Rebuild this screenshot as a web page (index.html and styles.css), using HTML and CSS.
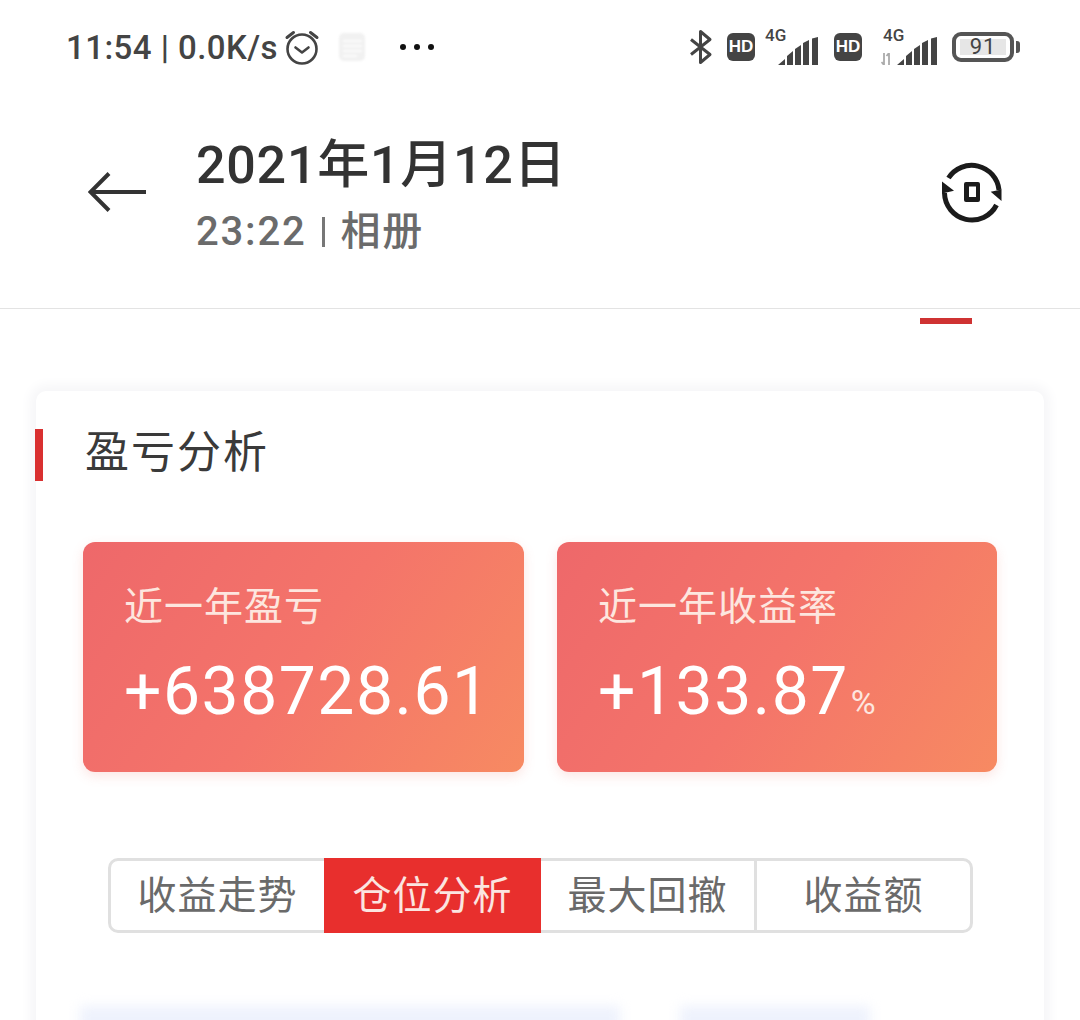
FILE: index.html
```html
<!DOCTYPE html>
<html lang="zh-CN">
<head>
<meta charset="utf-8">
<title>盈亏分析</title>
<link rel="stylesheet" href="styles.css">
</head>
<body>
<div class="phone">
  <div class="statusbar">
    <div class="status-left">
      <span class="clock">11:54 | 0.0K/s</span>
      <svg class="alarm" width="36" height="36" viewBox="0 0 36 36" fill="none" stroke="#444" stroke-width="2.6" stroke-linecap="round" stroke-linejoin="round"><circle cx="18" cy="20" r="14.5"/><path d="M11.5 18.5l6.5 5 6.5-5"/><path d="M3 8.5 9.5 3.5M33 8.5 26.500 3.500" stroke-width="3"/></svg>
      <svg class="doc" width="34" height="32" viewBox="0 0 34 32"><rect x="3" y="2" width="26" height="28" rx="5" fill="#f1f1f1"/><path d="M7 10h19M7 15h19M7 20h19M7 25h14" stroke="#fcfcfc" stroke-width="1.800"/></svg>
      <div class="dots"><i></i><i></i><i></i></div>
    </div>
    <div class="status-right">
      <svg class="bt" width="24" height="36" viewBox="0 0 24 36" fill="none" stroke="#444" stroke-width="3" stroke-linejoin="round"><path d="M2 10.500 21 25.500 11.500 33.500V2.500L21 10.500 2 25.500"/></svg>
      <span class="hd">HD</span>
      <div class="signal signal-a">
        <span class="net">4G</span>
        <svg width="40" height="28" viewBox="0 0 40 28" fill="#444"><path d="M0 28l7-6v6zM9 28V19l6-5v14zM17 28V12l6-4v20zM25 28V6l6-3v25zM34 28V1.500L40 0v28z"/></svg>
      </div>
      <span class="hd">HD</span>
      <div class="signal signal-b">
        <span class="net">4G</span>
        <svg class="arrows" width="11" height="12" viewBox="0 0 11 12" fill="none" stroke="#aaa" stroke-width="1.800"><path d="M3 0v12M0.500 9l2.500 3M8 12V0M5.500 3L8 0"/></svg>
        <svg width="40" height="28" viewBox="0 0 40 28" fill="#444"><path d="M0 28l7-6v6zM9 28V19l6-5v14zM17 28V12l6-4v20zM25 28V6l6-3v25zM34 28V1.500L40 0v28z"/></svg>
      </div>
      <div class="battery"><span class="level">91</span></div>
      <span class="cap"></span>
    </div>
  </div>

  <header class="topbar">
    <svg class="back" width="58" height="40" viewBox="0 0 58 40" fill="none" stroke="#333" stroke-width="4"><path d="M58 20H3M21 1.500 2.500 20 21 38.500"/></svg>
    <div class="titles">
      <h1 class="date">2021年1月12日</h1>
      <p class="meta"><span>23:22</span><i class="sep"></i><span>相册</span></p>
    </div>
    <svg class="rotate" width="62" height="62" viewBox="0 0 62 62" fill="none"><path d="M7.500 17A27.500 27.500 0 0 1 58 29M55.500 44A27.500 27.500 0 0 1 3.500 32" stroke="#1b1b1b" stroke-width="5"/><path d="M49.700 30.700 60.500 28.500 60.500 40zM1 20.500 13 29.700 1 32.500z" fill="#1b1b1b"/><path fill-rule="evenodd" d="M25 21h12a2 2 0 0 1 2 2v16a2 2 0 0 1-2 2H25a2 2 0 0 1-2-2V23a2 2 0 0 1 2-2zM28 25.500v10.500h7V25.500z" fill="#1b1b1b"/></svg>
  </header>

  <main class="content">
    <div class="tab-mark"></div>
    <section class="card">
      <h2 class="card-title">盈亏分析</h2>
      <div class="stats">
        <div class="stat">
          <div class="stat-label">近一年盈亏</div>
          <div class="stat-value">+638728.61</div>
        </div>
        <div class="stat">
          <div class="stat-label">近一年收益率</div>
          <div class="stat-value">+133.87<small>%</small></div>
        </div>
      </div>
      <div class="segments">
        <div class="segment">收益走势</div>
        <div class="segment active">仓位分析</div>
        <div class="segment">最大回撤</div>
        <div class="segment divided">收益额</div>
      </div>
      <div class="blurs"><i class="blur-a"></i><i class="blur-b"></i></div>
    </section>
  </main>
</div>
</body>
</html>
```
FILE: styles.css
```css
* { box-sizing: border-box; }
html, body { margin: 0; padding: 0; background: #fff; }
body { font-family: "Roboto", "Noto Sans CJK SC", sans-serif; }
.phone { width: 1080px; height: 1020px; overflow: hidden; background: #fff; }

.statusbar { height: 96px; padding: 0 60px 2px 66px; display: flex; align-items: center; justify-content: space-between; }
.status-left, .status-right { display: flex; align-items: center; }
.clock { font-size: 33px; font-weight: 500; color: #444; white-space: nowrap; letter-spacing: 0.45px; }
.alarm { margin-left: 6px; }
.doc { margin-left: 16px; filter: blur(1px); }
.dots { margin-left: 30px; display: flex; gap: 8px; }
.dots i { width: 6px; height: 6px; border-radius: 50%; background: #111; }
.bt { margin-right: 14px; }
.hd { width: 28px; height: 28px; border-radius: 6px; background: #444; color: #fff; font: 700 17px/28px "Liberation Sans", sans-serif; text-align: center; }
.signal { position: relative; height: 36px; display: flex; justify-content: flex-end; align-items: flex-end; }
.signal svg { display: block; }
.signal-a { width: 53px; margin: 0 16px 0 10px; }
.signal-b { width: 56px; margin: 0 15px 0 19px; }
.net { position: absolute; left: 0; top: -3px; font-size: 17px; font-weight: 500; color: #444; line-height: 18px; }
.signal-b .net { left: 2px; }
.signal .arrows { position: absolute; left: 0; bottom: 0; }
.battery { width: 62px; height: 30px; border: 4px solid #555; border-radius: 9px; padding: 3px 4px; display: flex; }
.level { flex: 1; background: #e6e6e6; color: #444; font-size: 22px; line-height: 16px; text-align: center; letter-spacing: 1px; }
.cap { width: 4px; height: 12px; margin-left: 2px; background: #555; border-radius: 0 3px 3px 0; }

.topbar { height: 213px; border-bottom: 1px solid #e3e3e3; padding: 0 77px 0 88px; display: flex; align-items: flex-start; }
.back { margin-top: 76px; flex: none; }
.titles { margin-left: 50px; flex: 1; padding-top: 35px; }
.date { margin: 0; font-size: 52px; font-weight: 500; line-height: 70px; color: #333; letter-spacing: 0.750px; }
.meta { margin: 3px 0 0; display: flex; align-items: center; font-size: 40px; line-height: 56px; color: #6b6b6b; font-weight: 500; letter-spacing: 1.800px; }
.sep { width: 3px; height: 30px; background: #777; margin: 0 15px 0 16px; }
.rotate { margin-top: 65px; flex: none; }

.content { position: relative; padding: 82px 36px 0; }
.tab-mark { position: absolute; left: 920px; top: 9px; width: 52px; height: 6px; background: #cf3232; }
.card { height: 700px; width: 1008px; background: #fff; border-radius: 10px 10px 0 0; box-shadow: 0 0 12px 6px #f6f6f8; position: relative; }
.card-title { position: relative; margin: 0; padding: 32px 0 0 49px; font-size: 44px; font-weight: 400; line-height: 60px; color: #3a3a3a; letter-spacing: 2px; }
.card-title::before { content: ""; position: absolute; left: -1px; top: 38px; width: 8px; height: 52px; background: #d93030; }
.stats { display: flex; gap: 33px; margin: 59px 47px 0; }
.stat { width: 441px; height: 230px; padding: 36px 41px 0; border-radius: 12px; color: #fff; background: linear-gradient(125deg, #ee686a 0%, #f4746a 50%, #f78a62 100%); box-shadow: 0 4px 12px rgba(240, 110, 100, .18); }
.stat-label { font-size: 39px; line-height: 58px; color: #fde6df; letter-spacing: 1px; white-space: nowrap; }
.stat-value { margin-top: 15px; font-size: 66px; line-height: 82px; letter-spacing: 1.500px; white-space: nowrap; }
.stat-value small { font-size: 34px; letter-spacing: 0; margin-left: 2px; color: #fde6df; }
.segments { margin: 86px 0 0 72px; width: 865px; height: 75px; display: flex; border: 3px solid #e0e0e0; border-radius: 10px; }
.segment { flex: 1; margin: 0; padding-bottom: 7px; display: flex; align-items: center; justify-content: center; font-size: 39px; color: #6a6a6a; letter-spacing: 1px; }
.segment.active { margin: -3px 0; background: #e82f2d; color: #fbe5e0; flex: 0 0 217px; }
.segment.divided { border-left: 3px solid #e0e0e0; }
.blurs { display: flex; margin: 73px 0 0 44px; gap: 60px; }
.blurs i { display: block; height: 30px; background: #eef2fd; filter: blur(6px); }
.blur-a { width: 540px; }
.blur-b { width: 190px; }
```
